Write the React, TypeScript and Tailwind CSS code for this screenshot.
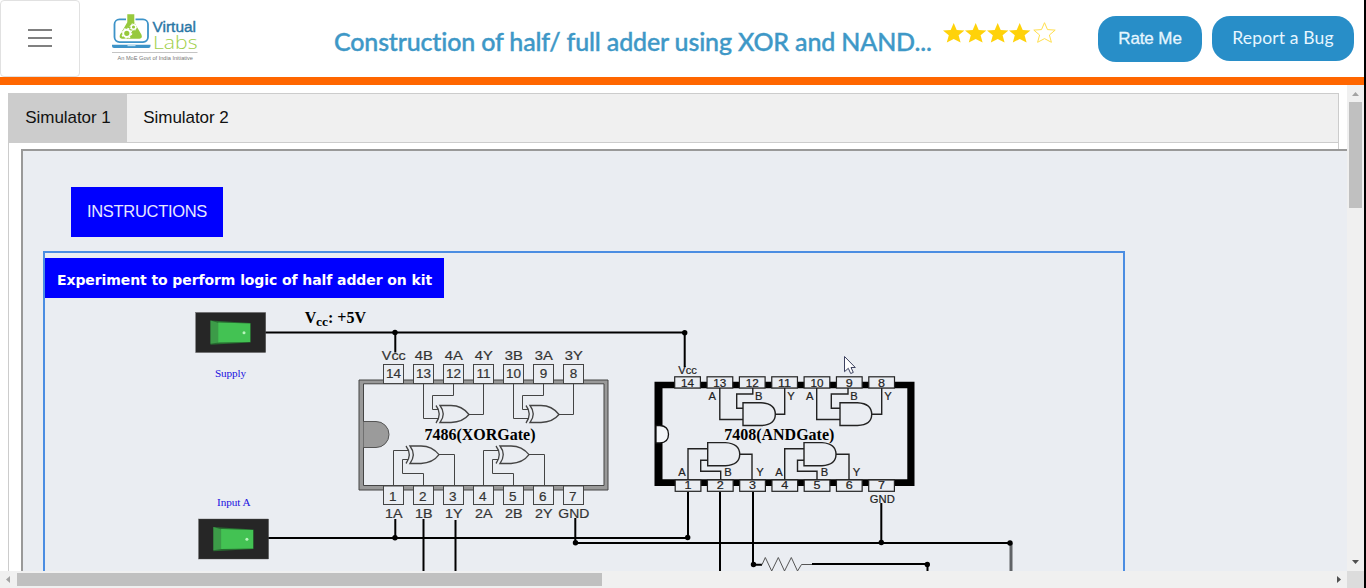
import React from "react";

const SANS = "'Liberation Sans', Arial, sans-serif";
const SERIF = "'Liberation Serif', 'Times New Roman', serif";

function Logo() {
  return (
    <svg className="mb-[3px] ml-[30px] h-[52px] w-[90px]" viewBox="110 11 90 52" fill="none">
      <path d="M126 19.3h-6.5a5 5 0 0 0-5 5v12.8a5 5 0 0 0 5 5H143a5 5 0 0 0 5-5V24.3a5 5 0 0 0-5-5h-7.500" stroke="#3d93c8" strokeWidth="1.8" />
      <path d="M112 44.700h38.500v1.300q0 2-2 2h-34.500q-2 0-2-2z" fill="#3d93c8" />
      <path d="M127.500 44.700h8v1.500h-8z" fill="#b9dcef" />
      <path d="M127.300 14.300h7v8l7.200 12.500q1.300 3.700-2 3.900h-17.500q-3.300-.4-2-3.900l7.300-12.500z" fill="#97c93d" />
      <circle cx="126.800" cy="33.300" r="3.600" stroke="#fff" strokeWidth="2" />
      <circle cx="126.800" cy="33.300" r="4.900" stroke="#fff" strokeWidth="1.200" strokeDasharray="1.900 1.950" />
      <circle cx="133.500" cy="27" r="2.300" stroke="#fff" strokeWidth="1.500" />
      <circle cx="133.500" cy="27" r="3.400" stroke="#fff" strokeWidth="1" strokeDasharray="1.300 1.370" />
      <text x="152.500" y="31.500" textLength="43.500" lengthAdjust="spacingAndGlyphs" fontFamily={SANS} fontWeight="400" fontSize="15.500" fill="#2a76a5" stroke="#2a76a5" strokeWidth=".4">Virtual</text>
      <text x="153" y="48.500" textLength="44.500" lengthAdjust="spacingAndGlyphs" fontFamily="'Open Sans', sans-serif" fontWeight="300" fontSize="17.500" fill="#9fcf4a">Labs</text>
      <path d="M112 52.500h85.500" stroke="#c4c4c4" />
      <text x="117.500" y="59.700" textLength="75.500" lengthAdjust="spacingAndGlyphs" fontFamily={SANS} fontSize="6" fill="#777">An MoE Govt of India Initiative</text>
    </svg>
  );
}

const STAR = "M0-10.300L3-3.400 10.700-2.900 4.900 2 6.900 9.300 0 5.600-6.900 9.300-4.900 2-10.700-2.900-3-3.400Z";

function Stars() {
  return (
    <svg className="mb-3 ml-[9px] h-6 w-[118px] shrink-0" viewBox="941 21 118 24">
      {[953.700, 975.700, 997.700, 1019.700].map((x) => (
        <path key={x} d={STAR} transform={`translate(${x} 33.300)`} fill="#ffd20a" />
      ))}
      <path d={STAR} transform="translate(1044.500 33)" fill="#fff" stroke="#ffdf4d" strokeWidth="1" />
    </svg>
  );
}

function Switch({ x, y }: { x: number; y: number }) {
  return (
    <g transform={`translate(${x} ${y})`}>
      <rect width="70" height="40" fill="#262626" stroke="#555" strokeWidth=".4" />
      <path d="M14.800 8 55 10.500V30L14.800 32.200Z" fill="#276b30" />
      <path d="M14.800 8 23 10.500V30L14.800 31.300Z" fill="#3c9b48" />
      <path d="M22.500 10 54.500 11V29.500L22.500 30Z" fill="#43c253" />
      <circle cx="48.300" cy="20.200" r="1.500" fill="#b9f5bd" />
    </g>
  );
}

function XorUp({ dx }: { dx: number }) {
  return (
    <g transform={`translate(${dx} 0)`}>
      <path d="M423.500 383.500V418.500H438M453.500 383.500V395.500H432.500V409.500H438M469 414.500H483.500V383.500" />
      <path d="M436 405.500Q442.500 414 436 423M440 405.500Q446.500 414 440 422.500H451Q463 422 469 414.500 462 405.500 451 405.500Z" strokeWidth="1.300" />
    </g>
  );
}

function XorDown({ dx }: { dx: number }) {
  return (
    <g transform={`translate(${dx} 0)`}>
      <path d="M393.500 486V450.500H409M423.500 486V473.500H402.500V459.500H408M439 454.500H454.500V486" />
      <path d="M406 446Q412.500 454.500 406 463.500M410 446Q416.500 454.500 410 463.500H421Q433 463 439 454.700 432 446 421 446Z" strokeWidth="1.300" />
    </g>
  );
}

function XorChip() {
  const top = ["14", "13", "12", "11", "10", "9", "8"];
  const topNames = ["Vcc", "4B", "4A", "4Y", "3B", "3A", "3Y"];
  const bottomNames = ["1A", "1B", "1Y", "2A", "2B", "2Y", "GND"];
  return (
    <g>
      <path fillRule="evenodd" d="M359 380H608V490H359ZM363.500 383.800V485.500H604V383.800Z" fill="#999" stroke="#444" strokeWidth="1" />
      <path d="M363.500 421.500H376A13 13 0 0 1 376 447.500H363.500" fill="#9b9b9b" stroke="#555" />
      <g fill="none" stroke="#444" strokeWidth="1">
        <XorUp dx={0} />
        <XorUp dx={90} />
        <XorDown dx={0} />
        <XorDown dx={90} />
      </g>
      <g fontFamily={SANS} fontSize="13.500" textAnchor="middle" fill="#333" stroke="#333" strokeWidth=".2">
        {top.map((n, i) => (
          <g key={n}>
            <rect x={383.500 + 30 * i} y="364.500" width="20" height="19" fill="#eaedf2" stroke="#444" strokeWidth="1" />
            <text x={393.500 + 30 * i} y="378.300">{n}</text>
            <text x={393.800 + 30 * i} y="360.300" textLength={i === 0 ? 24 : 18} lengthAdjust="spacingAndGlyphs" fontSize="13.300">{topNames[i]}</text>
            <rect x={383.500 + 30 * i} y="486" width="20" height="18.500" fill="#eaedf2" stroke="#444" strokeWidth="1" />
            <text x={392.800 + 30 * i} y="500.500">{i + 1}</text>
            <text x={393.800 + 30 * i} y="518.300" textLength={i === 6 ? 31 : 17.500} lengthAdjust="spacingAndGlyphs" fontSize="13.300">{bottomNames[i]}</text>
          </g>
        ))}
      </g>
      <text x="424.500" y="440.300" textLength="111" fontFamily={SERIF} fontWeight="700" fontSize="16">7486(XORGate)</text>
    </g>
  );
}

function AndChip() {
  const top = ["14", "13", "12", "11", "10", "9", "8"];
  const upper: [string, number][] = [["A", 712.300], ["B", 758.700], ["Y", 791], ["A", 809.700], ["B", 854], ["Y", 888]];
  const lower: [string, number][] = [["A", 682], ["B", 728], ["Y", 760], ["A", 779], ["B", 824.500], ["Y", 856.500]];
  return (
    <g>
      <path fillRule="evenodd" d="M654.500 381.700H914.500V486H654.500ZM662.500 388.300V479.300H907.300V388.300Z" fill="#000" />
      <path d="M656 425.500H660Q668.500 426 668.500 434.300T660 443H656Z" fill="#f4f6f9" stroke="#111" strokeWidth="1.300" />
      <g fill="none" stroke="#222" strokeWidth="1.400">
        <path d="M719.800 388V419.500H743M752.800 388V394H736.700V408.300H743M775.300 414.300H784.700V388" />
        <path d="M743 402.700H761Q775.300 403.500 775.300 414.300T761 425.500H743Z" />
        <path d="M816.700 388V419.500H840M848 388V394H831.300V408.300H840M871.700 414.300H881.700V388" />
        <path d="M840 402.700H857.500Q871.700 403.500 871.700 414.300T857.500 425.500H840Z" />
        <path d="M688 480V448.700H707.700M720.700 480V471.300H700.700V460.300H707.700M739.700 454.300H752V480" />
        <path d="M707.700 442.600H725.500Q739.700 443.500 739.700 454.300T725.500 465.700H707.700Z" />
        <path d="M784.700 480V448.700H804M817 480V471.300H797.500V460.300H804M836 454.300H849V480" />
        <path d="M804 442.600H822Q836 443.500 836 454.300T822 465.700H804Z" />
      </g>
      <g fontFamily={SANS} fontSize="11.200" textAnchor="middle" fill="#222" stroke="#222" strokeWidth=".2">
        {top.map((n, i) => (
          <g key={n}>
            <rect x={674.700 + 32.350 * i} y="376.800" width="25.700" height="11.200" fill="#eaedf2" stroke="#222" strokeWidth="1.200" />
            <text x={687.500 + 32.350 * i} y="386.500" textLength={n.length === 2 ? 13 : 7} lengthAdjust="spacingAndGlyphs">{n}</text>
            <rect x={675.200 + 32.250 * i} y="480" width="25.700" height="11.300" fill="#eaedf2" stroke="#222" strokeWidth="1.200" />
            <text x={688 + 32.250 * i} y="489.300" textLength="7" lengthAdjust="spacingAndGlyphs">{i + 1}</text>
          </g>
        ))}
        {upper.map(([n, x]) => <text key={x} x={x} y="400">{n}</text>)}
        {lower.map(([n, x]) => <text key={x} x={x} y="476">{n}</text>)}
        <text x="687.500" y="374">Vcc</text>
        <text x="882.300" y="503">GND</text>
      </g>
      <text x="724.300" y="439.700" textLength="110" fontFamily={SERIF} fontWeight="700" fontSize="16">7408(ANDGate)</text>
    </g>
  );
}

function Circuit() {
  const dots = [[395, 332.500], [684.700, 332.700], [395, 537.700], [687.700, 537.500], [575.500, 542.700], [881.300, 542.500], [753.500, 564.500], [1010, 543], [927.300, 564.500]];
  return (
    <svg className="block h-[274px] w-[1078px]" viewBox="45 297 1078 274">
      <XorChip />
      <AndChip />
      <g fill="none" stroke="#000" strokeWidth="2">
        <path d="M265 332.500H684.700V367M395.300 332.500V352.500" />
        <path d="M267 538H688V492M395.300 519V538M423.500 519V571M455.500 520V571" />
        <path d="M575.300 518V543H1010M881.300 503V543M720 492V571M753 492V564.700H762M812 564H927.500V571" />
      </g>
      <path d="M1011 543V571" stroke="#606367" strokeWidth="3" />
      <path d="M762 564.700 765.300 557.500 771.700 571 778.300 557.500 784.500 571 791.300 557.500 797.500 571 801.500 564.500H812" fill="none" stroke="#555" strokeWidth="1" />
      {dots.map(([x, y]) => <circle key={`${x}-${y}`} cx={x} cy={y} r="2.700" />)}
      <Switch x={195.700} y={312.500} />
      <Switch x={198.600} y={519} />
      <g fontFamily={SERIF} fontSize="11.200" fill="#1a10e0">
        <text x="215" y="377.300" textLength="31">Supply</text>
        <text x="217" y="506" textLength="33.500">Input A</text>
      </g>
      <g fontFamily={SERIF} fontSize="16" fontWeight="700">
        <text x="304.800" y="322.500">V</text>
        <text x="316" y="326" fontSize="13.500">cc</text>
        <text x="328" y="322.500" textLength="38">: +5V</text>
      </g>
      <path d="M844.500 356.500V371.700L848.300 368.300 850.700 373.500 853.300 372.400 851 367.500H855.300Z" fill="#fff" stroke="#3d4260" strokeWidth="1" />
    </svg>
  );
}

function Header() {
  return (
    <header className="flex h-[77px] shrink-0 items-center bg-white">
      <button className="flex h-[77px] w-20 shrink-0 flex-col items-center justify-center gap-[6px] rounded border border-[#e1e1e1] pb-px">
        <span className="h-[2px] w-6 bg-[#808080]" />
        <span className="h-[2px] w-6 bg-[#808080]" />
        <span className="h-[2px] w-6 bg-[#808080]" />
      </button>
      <Logo />
      <h1 className="ml-[134px] mt-[6px] w-[598px] shrink-0 whitespace-nowrap font-['Lato',sans-serif] text-[25px] font-medium tracking-[-0.16px] text-[#3e98c7] [-webkit-text-stroke:0.4px_#3e98c7]">
        Construction of half/ full adder using XOR and NAND...
      </h1>
      <Stars />
      <button className="ml-[39px] mt-px h-[46px] w-[104px] shrink-0 rounded-[18px] bg-[#288ec8] pb-px font-['Liberation_Sans',sans-serif] text-[17px] tracking-[-0.1px] text-[#e6f6ff] [-webkit-text-stroke:0.3px_#e6f6ff]">Rate Me</button>
      <button className="ml-[10px] h-[45px] w-[142px] shrink-0 rounded-[18px] bg-[#288ec8] font-['Lato',sans-serif] text-[17.500px] tracking-[0.15px] text-[#e6f6ff]">Report a Bug</button>
    </header>
  );
}

export default function App() {
  return (
    <div className="flex h-[588px] w-[1366px] overflow-hidden bg-black font-['Liberation_Sans',sans-serif]">
      <div className="flex w-[1364px] flex-col bg-white">
        <Header />
        <div className="h-2 shrink-0 bg-[#ff6600]" />
        <div className="flex h-[486px] shrink-0">
          <main className="h-full w-[1347px] overflow-hidden pl-2 pt-2">
            <nav className="flex h-[50px] w-[1331px] border border-[#ccc] bg-[#f0f0f0] text-[17px] tracking-[-0.05px]">
              <button className="w-[118px] bg-[#ccc] text-[#111]">Simulator 1</button>
              <button className="w-[118px] text-[#111]">Simulator 2</button>
            </nav>
            <div className="h-[450px] w-[1331px] border-x border-[#ccc] pl-3 pt-[6px]">
              <section className="h-[450px] w-[1327px] border-l-2 border-t-2 border-[#999] bg-[#eaedf2] pl-5 pt-9">
                <button className="ml-7 block h-[50px] w-[152px] bg-[#0000ff] pb-[2px] text-[16.500px] tracking-[-0.3px] text-[#e8e8ff]">INSTRUCTIONS</button>
                <div className="mt-[14px] h-[400px] w-[1082px] border-2 border-[#4b8de2] pt-[5px]">
                  <h2 className="mb-[-1px] flex h-10 w-[399px] items-center justify-center whitespace-nowrap bg-[#0000ff] pt-[5px] font-['DejaVu_Sans',sans-serif] text-[14px] font-bold tracking-[-0.09px] text-white">
                    Experiment to perform logic of half adder on kit
                  </h2>
                  <Circuit />
                </div>
              </section>
            </div>
          </main>
          <div className="flex h-full w-[17px] flex-col items-center bg-[#f0f0f0]">
            <svg className="h-[17px] w-[17px] shrink-0" viewBox="0 0 17 17"><path d="M5 11h7L8.500 7Z" fill="#a3a3a3" /></svg>
            <div className="h-[106px] w-[13px] bg-[#c0c0c0]" />
            <svg className="mt-auto h-[17px] w-[17px] shrink-0" viewBox="0 0 17 17"><path d="M5 6h7l-3.500 4Z" fill="#505050" /></svg>
          </div>
        </div>
        <div className="flex h-[17px] shrink-0 items-center bg-[#f0f0f0]">
          <svg className="h-[17px] w-[17px]" viewBox="0 0 17 17"><path d="M10 5v7L6 8.500Z" fill="#a3a3a3" /></svg>
          <div className="h-[13px] w-[585px] bg-[#c0c0c0]" />
          <svg className="ml-auto h-[17px] w-[17px]" viewBox="0 0 17 17"><path d="M7 5v7l4-3.500Z" fill="#505050" /></svg>
          <div className="h-[17px] w-[17px] bg-[#dcdcdc]" />
        </div>
      </div>
    </div>
  );
}
